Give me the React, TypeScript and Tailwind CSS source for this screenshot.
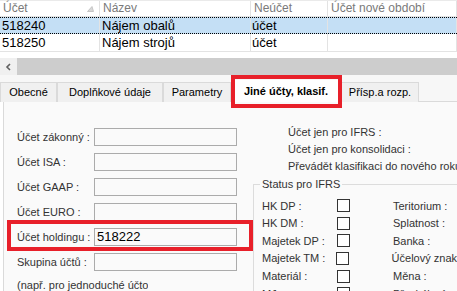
import React from 'react';

const rows = [
  { ucet: '518240', nazev: 'Nájem obalů', neucet: 'účet', selected: true },
  { ucet: '518250', nazev: 'Nájem strojů', neucet: 'účet', selected: false },
];

const tabs = ['Obecné', 'Doplňkové údaje', 'Parametry', 'Jiné účty, klasif.', 'Přísp.a rozp.'];
const tabWidths = ['w-[57px]', 'w-[106px]', 'w-[68px]', 'w-[110px]', 'w-[78px]'];

const fields = [
  { label: 'Účet zákonný :', value: '' },
  { label: 'Účet ISA :', value: '' },
  { label: 'Účet GAAP :', value: '' },
  { label: 'Účet EURO :', value: '' },
  { label: 'Účet holdingu :', value: '518222', marked: true },
  { label: 'Skupina účtů :', value: '' },
];

const statusLeft = ['HK DP :', 'HK DM :', 'Majetek DP :', 'Majetek TM :', 'Materiál :', 'MJ :'];
const statusRight = ['Teritorium :', 'Splatnost :', 'Banka :', 'Účelový znak', 'Měna :', 'Přechýlení'];

export default function App() {
  return (
    <div className="w-[457px] h-[291px] overflow-hidden bg-white text-[11px] text-[#1e1e1e] font-['Liberation_Sans',Arial,sans-serif] flex flex-col">
      {/* mřížka */}
      <div className="h-[58px] shrink-0 flex flex-col bg-white">
        <div className="h-[17px] shrink-0 flex border-t border-[#eaeaea] border-b border-b-[#e3e3e3] text-[12px] text-[#7a7a7a] leading-[15px]">
          <div className="w-[100px] px-[3px] flex items-center justify-between border-r border-[#e3e3e3]">
            <span>Účet</span>
            <svg width="7" height="6" viewBox="0 0 7 6" className="mr-[2px]">
              <path d="M0.5 5.5 L5 0.5 L6.5 5.5 Z" fill="#d8d8d8" stroke="#bdbdbd" strokeWidth="0.8" />
            </svg>
          </div>
          <div className="w-[151px] px-[3px] flex items-center border-r border-[#e3e3e3]">Název</div>
          <div className="w-[77px] px-[3px] flex items-center border-r border-[#e3e3e3]">Neúčet</div>
          <div className="flex-1 px-[3px] flex items-center border-r border-[#e3e3e3]">Účet nové období</div>
        </div>
        {rows.map((r) => (
          <div
            key={r.ucet}
            className={
              r.selected
                ? 'h-[17px] shrink-0 flex text-[13px] text-black leading-[15px] bg-[#c4dff5] border-y border-dotted border-black'
                : 'h-[18px] shrink-0 flex text-[13px] text-black leading-[15px] border-b border-[#e3e3e3]'
            }
          >
            <div className="w-[100px] px-[2px] flex items-center border-r border-[#e3e3e3]">{r.ucet}</div>
            <div className="w-[151px] px-[2px] flex items-center border-r border-[#e3e3e3]">{r.nazev}</div>
            <div className="w-[77px] px-[1px] flex items-center border-r border-[#e3e3e3]">{r.neucet}</div>
            <div className="flex-1 border-r border-[#e3e3e3]" />
          </div>
        ))}
      </div>

      {/* posuvník */}
      <div className="h-[17px] shrink-0 flex bg-[#cdcdcd]">
        <div className="w-[17px] bg-[#f0f0f0] flex items-center justify-center">
          <svg width="7" height="8" viewBox="0 0 7 8">
            <path d="M5 1 L2 4 L5 7" fill="none" stroke="#606060" strokeWidth="1.6" />
          </svg>
        </div>
      </div>

      {/* záložky */}
      <div className="h-[27px] shrink-0 bg-[#f7f7f7] flex items-end">
        {tabs.map((t, i) => {
          const active = i === 3;
          return (
            <div
              key={t}
              className={
                active
                  ? `${tabWidths[i]} h-[22px] relative bg-white flex items-center justify-center font-bold text-black`
                  : `${tabWidths[i]} h-[20px] bg-[#f0f0f0] border border-[#dadada] border-b-0 flex items-center justify-center text-black`
              }
            >
              {t}
              {active && <div className="absolute left-0 right-[-1px] top-[-5px] bottom-[-6px] border-[4px] border-[#e8202a]" />}
            </div>
          );
        })}
        <div className="flex-1 h-[20px] border-b border-[#dadada]" />
      </div>

      {/* obsah */}
      <div className="flex-1 min-h-0 overflow-hidden ml-[3px] border-l border-[#dadada] bg-[#fafafa] flex text-[#333]">
        <div className="w-[245px] shrink-0 pt-[26px] pl-[13px] flex flex-col gap-[7px]">
          {fields.map((f) => (
            <div key={f.label} className="relative h-[18px] shrink-0 flex items-center">
              <span className="w-[77px] whitespace-nowrap">{f.label}</span>
              <div className="w-[143px] h-[18px] border border-[#ababab] bg-[#fafafa] flex items-center px-[2px] text-[13px] text-black">
                {f.value}
              </div>
              {f.marked && <div className="absolute left-[-10px] right-[-4px] top-[-8px] bottom-[-5px] border-[4px] border-[#e8202a]" />}
            </div>
          ))}
          <div className="w-[131px] h-[16px] shrink-0 overflow-hidden whitespace-nowrap mt-[-1px]">(např. pro jednoduché účto</div>
        </div>

        <div className="flex-1 min-w-0 flex flex-col pt-[22px]">
          <div className="pl-[39px] flex flex-col leading-[17px] whitespace-nowrap">
            <span>Účet jen pro IFRS :</span>
            <span>Účet jen pro konsolidaci :</span>
            <span>Převádět klasifikaci do nového roku</span>
          </div>
          <div className="ml-[4px] mt-[9px] border-l border-t border-[#dcdcdc] relative pt-[12px] pl-[8px]">
            <span className="absolute left-[6px] top-[-8px] px-[2px] bg-[#fafafa] leading-[15px]">Status pro IFRS</span>
            <div className="flex flex-col">
              {statusLeft.map((l, i) => (
                <div key={l} className="h-[17.6px] shrink-0 flex items-center whitespace-nowrap">
                  <span className="w-[75px]">{l}</span>
                  <span className="w-[13px] h-[13px] border border-[#333] bg-white" />
                  <span className="ml-[43px]">{statusRight[i]}</span>
                </div>
              ))}
            </div>
          </div>
        </div>
      </div>
    </div>
  );
}
